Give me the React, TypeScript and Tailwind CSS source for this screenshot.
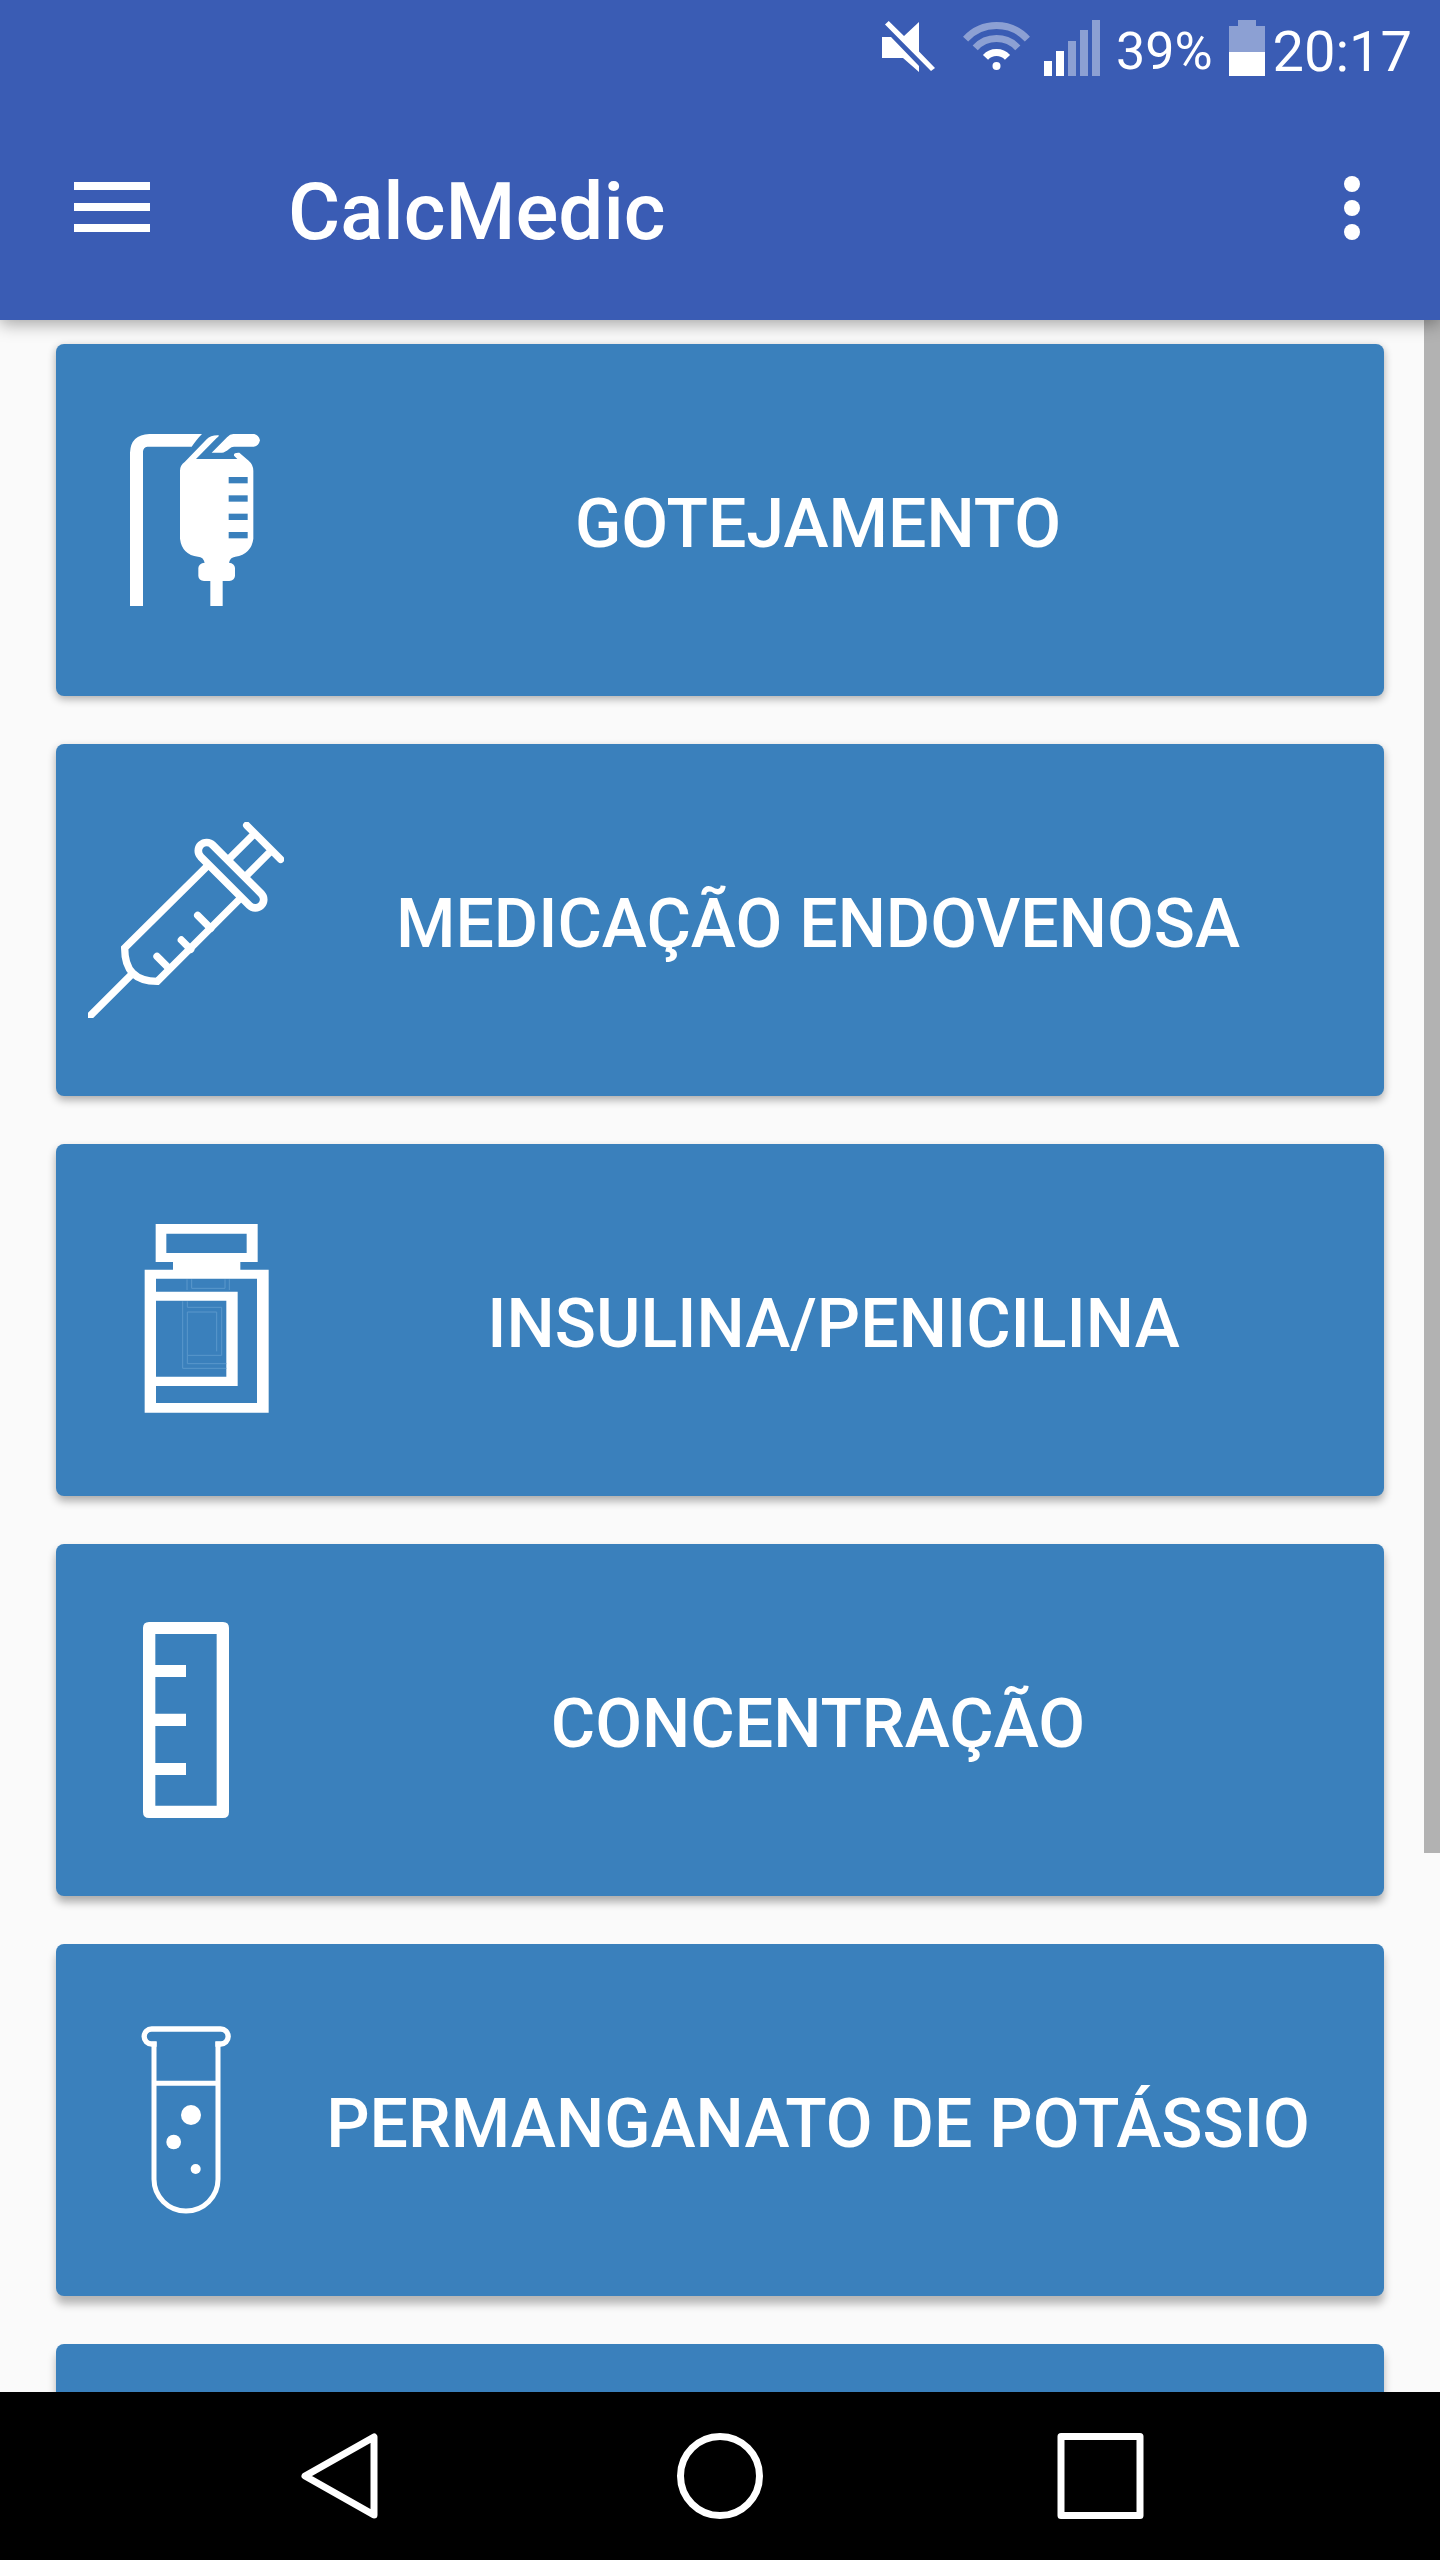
import React from 'react';

interface MenuEntry {
  label: string;
  icon: React.ReactNode;
  shadow: string;
}

const DripIcon: React.FC = () => (
  <svg viewBox="114 126 588 588" className="h-[196px] w-[196px] shrink-0" fill="#fff" aria-hidden="true">
    <path d="M240 678V218Q242 164 298 162H456Q442 176 425 200H292Q280 202 279 214V678Z" />
    <path d="M485 218L531 172Q540 162 550 162H612Q626 164 630 181Q626 198 612 200H552Q544 200 538 206Q525 217 516 218Z" />
    <path d="M390 272Q390 256 404 246L470 178Q482 165 506 166Q508 168 500 174L438 237H562L552 227Q550 217 568 218L596 242Q610 254 610 272V476Q604 522 556 530Q540 532 537 548Q554 550 555 564V588Q553 602 538 603H518V678H481V603H462Q446 602 445 588V564Q446 550 464 548Q460 530 444 530Q396 524 390 476Z" />
    <g fill="#3a80bc">
      <rect x="536" y="291" width="57" height="19" />
      <rect x="536" y="346" width="57" height="19" />
      <rect x="536" y="401" width="57" height="19" />
      <rect x="536" y="456" width="57" height="19" />
    </g>
  </svg>
);

const SyringeIcon: React.FC = () => (
  <svg
    viewBox="114 246 588 588"
    className="h-[196px] w-[196px] shrink-0"
    fill="none"
    stroke="#fff"
    strokeWidth="22"
    strokeLinecap="round"
    aria-hidden="true"
  >
    <path d="M114 834L245 703" />
    <path d="M474 376L224 624C224 692 256 724 322 724L572 474" />
    <path d="M452 350A25 25 0 0 1 488 315L634 461A25 25 0 0 1 598 496Z" strokeWidth="23" />
    <path d="M590 256L692 358M612 282L538 356M664 332L590 406" />
    <path d="M443 526L482 565M394 600L422 628M321 649L357 685" />
  </svg>
);

const VialIcon: React.FC = () => (
  <svg viewBox="114 246 681 588" className="h-[196px] w-[227px] shrink-0" fill="#fff" aria-hidden="true">
    <path fillRule="evenodd" d="M317 252H623V366H571V389H656V818H284V389H369V366H317ZM349 281V339H590V281ZM318 416V455H563V738H318V789H621V416ZM318 482V710H529V482Z" />
    {/* fine inner outlines of the label */}
    <g fill="none" stroke="#5a97cb" strokeWidth="3">
      <path d="M425 418V445H525V418M411 418V450M538 418V450" />
      <path d="M529 685H398V484M412 484V502H515V646H412V671H529M412 646V516H500V634" />
    </g>
  </svg>
);

const RulerIcon: React.FC = () => (
  <svg viewBox="114 246 588 588" className="h-[196px] w-[196px] shrink-0" fill="#fff" aria-hidden="true">
    <path fillRule="evenodd" d="M297 246H519Q537 246 537 264V816Q537 834 519 834H297Q279 834 279 816V264Q279 246 297 246ZM316 282V375H408V411H316V521H408V558H316V669H408V705H316V797H500V282Z" />
  </svg>
);

const TubeIcon: React.FC = () => (
  <svg viewBox="114 246 588 588" className="h-[196px] w-[196px] shrink-0" fill="none" stroke="#fff" strokeWidth="16" aria-hidden="true">
    <path d="M320 312H305A22 22 0 0 1 305 267H512A22 22 0 0 1 512 312H496" />
    <path d="M312 305V718A96 95 0 0 0 504 718V305M312 430H504" strokeWidth="15" />
    <g fill="#fff" stroke="none">
      <circle cx="423" cy="525" r="30" />
      <circle cx="371" cy="606" r="22" />
      <circle cx="437" cy="687" r="15" />
    </g>
  </svg>
);

const entries: MenuEntry[] = [
  { label: 'GOTEJAMENTO', icon: <DripIcon />, shadow: 'shadow-[0_3px_8px_rgba(0,0,0,0.32)]' },
  { label: 'MEDICAÇÃO ENDOVENOSA', icon: <SyringeIcon />, shadow: 'shadow-[0_4px_8px_rgba(0,0,0,0.32)]' },
  { label: 'INSULINA/PENICILINA', icon: <VialIcon />, shadow: 'shadow-[0_5px_8px_rgba(0,0,0,0.32)]' },
  { label: 'CONCENTRAÇÃO', icon: <RulerIcon />, shadow: 'shadow-[0_6px_8px_rgba(0,0,0,0.32)]' },
  { label: 'PERMANGANATO DE POTÁSSIO', icon: <TubeIcon />, shadow: 'shadow-[0_8px_8px_rgba(0,0,0,0.28)]' },
];

const StatusBar: React.FC = () => (
  <div className="flex h-24 items-center justify-end pr-7">
    <svg viewBox="881 20 54 56" className="h-14 w-[54px]" fill="#fff" aria-hidden="true">
      <path d="M881 37H890L918 66V72L902 58H881Z" />
      <path d="M884 24.500L887.700 21L903 36L918 22V51.500L934 68L930 71Z" />
    </svg>
    <svg viewBox="961 20 69 56" className="ml-[26px] h-14 w-[69px]" fill="none" stroke="#fff" strokeWidth="7" aria-hidden="true">
      <g strokeOpacity="0.42">
        <path d="M964.600 39.100A42 42 0 0 1 1026.400 39.100" />
        <path d="M974.200 47.900A29 29 0 0 1 1016.800 47.900" />
      </g>
      <path d="M984.500 57.300A15 15 0 0 1 1006.500 57.300" />
      <circle cx="995.500" cy="66" r="4" fill="#fff" stroke="none" />
    </svg>
    <svg viewBox="1043 20 56 56" className="ml-[13px] h-14 w-14" fill="#fff" aria-hidden="true">
      <path d="M1043 61h8v15h-8zM1055 51h8v25h-8z" />
      <path d="M1067 41h8v35h-8zM1079 30h8v46h-8zM1091 20h8v56h-8z" fillOpacity="0.42" />
    </svg>
    <span className="ml-4 pt-2 text-[52px] leading-none">39%</span>
    <svg viewBox="1229 20 36 56" className="ml-4 h-14 w-9" fill="#fff" aria-hidden="true">
      <path d="M1238 20h18v6h9v26h-36V26h9z" fillOpacity="0.42" />
      <path d="M1229 52h36v24h-36z" />
    </svg>
    <span className="ml-2 pt-2 text-[56px] leading-none">20:17</span>
  </div>
);

const AppBar: React.FC = () => (
  <div className="flex h-56 items-center pr-12 pl-14">
    <button type="button" aria-label="Menu" className="flex h-28 w-28 items-center justify-center">
      <svg viewBox="0 0 76 52" className="h-[52px] w-[76px]" fill="#fff" aria-hidden="true">
        <path d="M0 0h76v8H0zM0 21h76v8H0zM0 42h76v8H0z" />
      </svg>
    </button>
    <h1 className="ml-[120px] flex-1 pt-2 text-[80px] leading-none font-medium">CalcMedic</h1>
    <button type="button" aria-label="Mais" className="flex h-28 w-20 items-center justify-center">
      <svg viewBox="0 0 16 64" className="h-16 w-4" fill="#fff" aria-hidden="true">
        <circle cx="8" cy="8" r="8" />
        <circle cx="8" cy="32" r="8" />
        <circle cx="8" cy="56" r="8" />
      </svg>
    </button>
  </div>
);

const NavBar: React.FC = () => (
  <nav className="grid h-[168px] shrink-0 grid-cols-3 items-center justify-items-center bg-black px-[150px]">
    <button type="button" aria-label="Voltar">
      <svg viewBox="0 0 88 88" className="h-[88px] w-[88px]" fill="none" stroke="#fff" strokeWidth="7" strokeLinejoin="round" aria-hidden="true">
        <path d="M78 5V83L9 44Z" />
      </svg>
    </button>
    <button type="button" aria-label="Início">
      <svg viewBox="0 0 88 88" className="h-[88px] w-[88px]" fill="none" stroke="#fff" strokeWidth="7" aria-hidden="true">
        <circle cx="44" cy="44" r="39.500" />
      </svg>
    </button>
    <button type="button" aria-label="Recentes">
      <svg viewBox="0 0 88 88" className="h-[88px] w-[88px]" fill="none" stroke="#fff" strokeWidth="7" strokeLinejoin="round" aria-hidden="true">
        <rect x="5" y="4.500" width="79" height="79" />
      </svg>
    </button>
  </nav>
);

const App: React.FC = () => {
  return (
    <div className="flex h-screen flex-col overflow-hidden bg-[#fafafa] font-[Roboto,sans-serif] text-white">
      <header className="relative z-10 shrink-0 bg-[#3a5cb4] shadow-[0_4px_16px_rgba(0,0,0,0.35)]">
        <StatusBar />
        <AppBar />
      </header>

      <main className="relative min-h-0 flex-1 overflow-hidden">
        <div className="flex flex-col gap-12 px-14 pt-6">
          {entries.map(entry => (
            <button
              key={entry.label}
              type="button"
              className={`flex h-[352px] shrink-0 items-center rounded-lg bg-[#3a80bc] px-8 ${entry.shadow}`}
            >
              {entry.icon}
              <span className="flex-1 pt-2 text-center text-[68px] leading-none font-medium">{entry.label}</span>
            </button>
          ))}
          {/* next card, only its top edge is in view */}
          <div className="h-[352px] shrink-0 rounded-lg bg-[#3a80bc] shadow-[0_8px_8px_rgba(0,0,0,0.28)]" />
        </div>
        {/* scroll thumb */}
        <div className="absolute top-0 right-0 h-[74%] w-4 bg-[#b2b2b2]" />
      </main>

      <NavBar />
    </div>
  );
};

export default App;
